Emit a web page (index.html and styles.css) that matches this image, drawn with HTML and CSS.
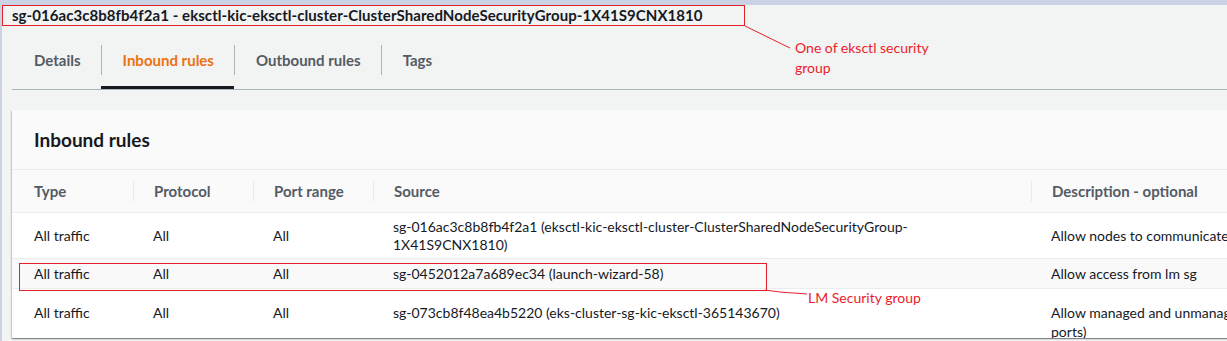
FILE: index.html
```html
<!DOCTYPE html>
<html lang="en">
<head>
  <meta charset="utf-8">
  <title>Security group - inbound rules</title>
  <link rel="stylesheet" href="styles.css">
</head>
<body>
  <h1 class="sg_title">sg-016ac3c8b8fb4f2a1 - eksctl-kic-eksctl-cluster-ClusterSharedNodeSecurityGroup-1X41S9CNX1810</h1>

  <div class="tabs">
    <div class="tab"><span class="tab_label">Details</span></div>
    <div class="tab active"><span class="tab_label">Inbound rules</span></div>
    <div class="tab"><span class="tab_label">Outbound rules</span></div>
    <div class="tab"><span class="tab_label">Tags</span></div>
  </div>

  <div class="card">
    <div class="card_header">Inbound rules</div>
    <table class="rules">
      <colgroup>
        <col class="c_type">
        <col class="c_proto">
        <col class="c_port">
        <col class="c_src">
        <col class="c_desc">
      </colgroup>
      <thead>
        <tr>
          <th>Type</th>
          <th><span class="th_div">Protocol</span></th>
          <th><span class="th_div">Port range</span></th>
          <th><span class="th_div">Source</span></th>
          <th><span class="th_div">Description - optional</span></th>
        </tr>
      </thead>
      <tbody>
        <tr class="row_tall">
          <td>All traffic</td>
          <td>All</td>
          <td>All</td>
          <td><div class="src">sg-016ac3c8b8fb4f2a1 (eksctl-kic-eksctl-cluster-ClusterSharedNodeSecurityGroup-1X41S9CNX1810)</div></td>
          <td>Allow nodes to communicate with each other</td>
        </tr>
        <tr class="row_short hover">
          <td>All traffic</td>
          <td>All</td>
          <td>All</td>
          <td><div class="src">sg-0452012a7a689ec34 (launch-wizard-58)</div></td>
          <td>Allow access from lm sg</td>
        </tr>
        <tr class="row_last">
          <td>All traffic</td>
          <td>All</td>
          <td>All</td>
          <td><div class="src">sg-073cb8f48ea4b5220 (eks-cluster-sg-kic-eksctl-365143670)</div></td>
          <td>Allow managed and unmanaged nodes to communicate with each other (all ports)</td>
        </tr>
      </tbody>
    </table>
  </div>

  <!-- annotations drawn over the screenshot -->
  <div class="mark_box"></div>
  <svg class="mark_lines" width="1227" height="341">
    <line x1="745" y1="26" x2="790" y2="48" stroke="#e3202a" stroke-width="1"/>
    <polyline points="765,290 780,292 807,294" fill="none" stroke="#e3202a" stroke-width="1"/>
  </svg>
  <div class="note note_top">One of eksctl security<br>group</div>
  <div class="note note_lm">LM Security group</div>
</body>
</html>
```
FILE: styles.css
```css
html, body {
    margin: 0px;
    padding: 0px;
}

body {
    width: 1227px;
    height: 341px;
    overflow: hidden;
    position: relative;
    box-sizing: border-box;
    background: #f2f3f3;
    border-top: 5px solid #c9d3e3;
    border-left: 2px solid #c9d3e3;
    font-family: Lato, "Open Sans", sans-serif;
    font-size: 14px;
    color: #16191f;
}

.sg_title {
    margin: 0px;
    width: 743px;
    height: 21px;
    box-sizing: border-box;
    border: 1px solid #e3202a;
    padding-left: 9px;
    font-size: 15px;
    font-weight: bold;
    line-height: 19px;
    letter-spacing: 0.06px;
    white-space: nowrap;
}

/* tabs */
.tabs {
    display: flex;
    margin: 19px 0px 0px 10px;
    border-bottom: 1px solid #aab7b8;
}

.tab {
    height: 44px;
    box-sizing: border-box;
    border-bottom: 3px solid transparent;
}

.tab.active {
    border-bottom-color: #16191f;
}

.tab_label {
    display: block;
    height: 30px;
    line-height: 30px;
    padding: 0px 20px 0px 22px;
    font-size: 15px;
    font-weight: bold;
    color: #545b64;
}

.tab + .tab .tab_label {
    border-left: 1px solid #aab7b8;
    padding-left: 21px;
}

.tab.active .tab_label {
    color: #ec7211;
}

/* card */
.card {
    margin: 20px 0px 0px 10px;
    width: 1560px;
    height: 228px;
    overflow: hidden;
    background: #fafafa;
    box-shadow: 0 1px 1px 0 rgba(0, 28, 36, 0.3), 1px 1px 1px 0 rgba(0, 28, 36, 0.15), -1px 1px 1px 0 rgba(0, 28, 36, 0.15);
}

.card_header {
    height: 59px;
    line-height: 59px;
    padding: 0px 22px;
    border-bottom: 1px solid #eaeded;
    font-size: 19px;
    font-weight: bold;
}

.rules {
    border-collapse: collapse;
    table-layout: fixed;
    width: 1539px;
}

.c_type { width: 121px; }
.c_proto { width: 120px; }
.c_port { width: 120px; }
.c_src { width: 658px; }
.c_desc { width: 520px; }

.rules th {
    height: 42px;
    padding: 0px;
    text-align: left;
    font-size: 15px;
    font-weight: bold;
    color: #545b64;
    border-bottom: 1px solid #eaeded;
}

.rules th:first-child {
    padding-left: 22px;
}

.th_div {
    display: block;
    height: 21px;
    line-height: 21px;
    padding-left: 20px;
    border-left: 1px solid #eaeded;
}

.rules td {
    padding: 0px 20px;
    line-height: 18px;
    vertical-align: middle;
    background: #ffffff;
    border-bottom: 1px solid #eaeded;
}

.rules td:first-child {
    padding-left: 22px;
}

.row_tall td {
    height: 45px;
}

.row_short td {
    height: 29px;
}

.row_short.hover td {
    background: #f9f9f9;
}

.row_last td {
    height: 47px;
    vertical-align: top;
    padding-top: 14px;
    box-sizing: border-box;
    line-height: 19px;
}

.src {
    max-width: 560px;
}

/* annotations */
.mark_box {
    position: absolute;
    left: 17px;
    top: 258px;
    width: 746px;
    height: 26px;
    border: 1px solid #e3202a;
}

.mark_lines {
    position: absolute;
    left: -2px;
    top: -5px;
}

.note {
    position: absolute;
    font-family: Lato, "Open Sans", sans-serif;
    font-size: 14px;
    line-height: 20px;
    color: #ea1c2a;
}

.note_top {
    left: 793px;
    top: 33px;
}

.note_lm {
    left: 806px;
    top: 283px;
}
```
